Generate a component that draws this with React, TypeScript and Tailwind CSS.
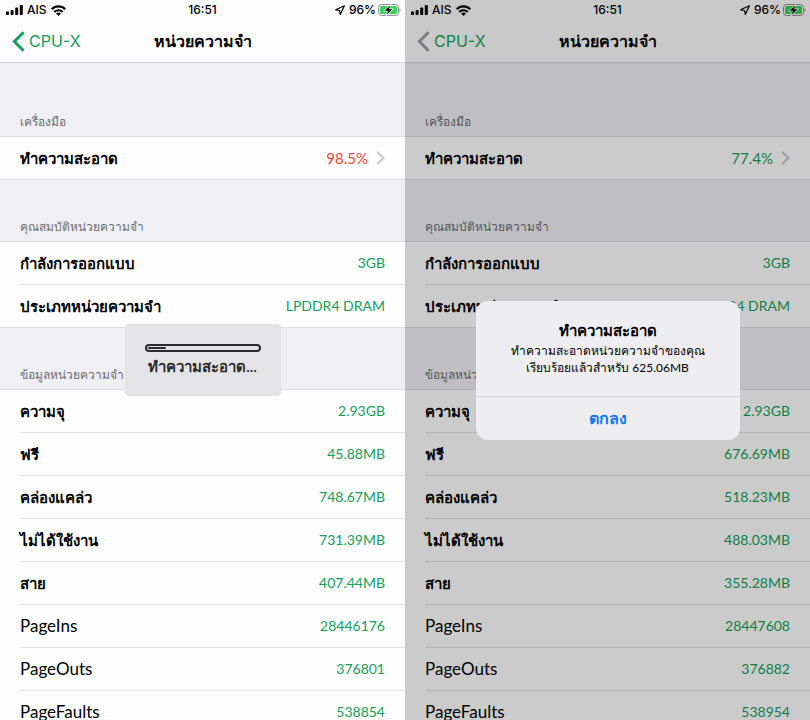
import type { ReactNode } from "react";

interface Row {
    label: string;
    value: string;
}

interface ScreenProps {
    usage: string;
    usageColor: string;
    backColor: string;
    info: Row[];
    children: ReactNode;
}

const specs: Row[] = [
    { label: "กำลังการออกแบบ", value: "3GB" },
    { label: "ประเภทหน่วยความจำ", value: "LPDDR4 DRAM" },
];

const before: Row[] = [
    { label: "ความจุ", value: "2.93GB" },
    { label: "ฟรี", value: "45.88MB" },
    { label: "คล่องแคล่ว", value: "748.67MB" },
    { label: "ไม่ได้ใช้งาน", value: "731.39MB" },
    { label: "สาย", value: "407.44MB" },
    { label: "PageIns", value: "28446176" },
    { label: "PageOuts", value: "376801" },
    { label: "PageFaults", value: "538854" },
];

const after: Row[] = [
    { label: "ความจุ", value: "2.93GB" },
    { label: "ฟรี", value: "676.69MB" },
    { label: "คล่องแคล่ว", value: "518.23MB" },
    { label: "ไม่ได้ใช้งาน", value: "488.03MB" },
    { label: "สาย", value: "355.28MB" },
    { label: "PageIns", value: "28447608" },
    { label: "PageOuts", value: "376882" },
    { label: "PageFaults", value: "538954" },
];

// Thai glyphs look bigger than Latin ones at the same size
const labelSize = (label: string) => (/^[A-Z]/.test(label) ? "text-[17px]" : "text-[15px] font-semibold");

const SignalIcon = () => (
    <svg width="17" height="10" viewBox="0 0 17 10" fill="currentColor" aria-hidden="true">
        <rect x="0" y="6.6" width="3" height="3.4" rx="0.8" />
        <rect x="4.6" y="5" width="3" height="5" rx="0.8" />
        <rect x="9.2" y="2.6" width="3" height="7.4" rx="0.8" />
        <rect x="13.8" y="0" width="3" height="10" rx="0.8" />
    </svg>
);

const WifiIcon = () => (
    <svg width="15" height="11" viewBox="0 0 15 11" fill="none" stroke="currentColor" strokeWidth="2.2" aria-hidden="true">
        <path d="M0.8 4.2a9.4 9.4 0 0 1 13.4 0" />
        <path d="M3.3 7a5.9 5.9 0 0 1 8.4 0" />
        <path d="M7.5 11L5.1 8.6a3.4 3.4 0 0 1 4.8 0z" fill="currentColor" stroke="none" />
    </svg>
);

const LocationIcon = () => (
    <svg width="10" height="10" viewBox="0 0 10 10" fill="none" stroke="currentColor" strokeWidth="1.2" strokeLinejoin="round" aria-hidden="true">
        <path d="M9.4 0.8L0.7 4.8l3.9.7.7 3.9z" />
    </svg>
);

const BatteryIcon = () => (
    <svg width="23" height="12" viewBox="0 0 23 12" aria-hidden="true">
        <rect x="0.5" y="0.5" width="20" height="11" rx="3" fill="none" stroke="#8e8e93" />
        <path d="M21.5 4.2c1.4.5 1.4 3.1 0 3.6z" fill="#8e8e93" />
        <rect x="2" y="2" width="17" height="8" rx="1.6" fill="#35d158" />
        <path d="M12.2 1.4L6.6 6.7h3.4L8.8 10.6l5.6-5.3H11z" fill="#000" stroke="#fff" strokeWidth="1.4" paintOrder="stroke" />
    </svg>
);

const StatusBar = () => (
    <div className="grid h-5 grid-cols-[1fr_auto_1fr] items-center font-['Inter','Noto_Sans',sans-serif] text-xs font-medium text-black">
        <div className="flex items-center gap-1 pl-1.5">
            <SignalIcon />
            <span>AIS</span>
            <WifiIcon />
        </div>
        <span>16:51</span>
        <div className="flex items-center justify-end gap-0.5 pr-1">
            <LocationIcon />
            <span className="ml-0.5">96%</span>
            <BatteryIcon />
        </div>
    </div>
);

const SectionTitle = ({ text, first = false }: { text: string; first?: boolean }) => (
    <h2 className={`flex items-end px-5 pb-1 text-xs leading-5 text-[#6d6d72] ${first ? "h-[73px]" : "h-[61px]"}`}>
        {text}
    </h2>
);

const RowList = ({ rows }: { rows: Row[] }) => (
    <dl className="border-y border-[#dcdce0] bg-[#fefefe]">
        {rows.map((row) => (
            <div key={row.label} className="group pl-5">
                <div className="flex h-[43px] items-center justify-between border-b border-[#e3e3e6] pr-5 group-last:h-[42px] group-last:border-b-0">
                    <dt className={`leading-5 text-black ${labelSize(row.label)}`}>{row.label}</dt>
                    <dd className="text-sm text-[#14a05c]">{row.value}</dd>
                </div>
            </div>
        ))}
    </dl>
);

const Screen = ({ usage, usageColor, backColor, info, children }: ScreenProps) => (
    <section className="relative h-screen overflow-hidden bg-[#efeff4]">
        <header className="h-[63px] border-b border-[#d4d4d8] bg-[#fcfcfd]">
            <StatusBar />
            <div className="grid h-[42px] grid-cols-[1fr_auto_1fr] items-center px-3">
                <button type="button" className="flex items-center gap-1 justify-self-start font-['Inter','Noto_Sans',sans-serif] text-base text-[#14a05c]">
                    <svg width="13" height="21" viewBox="0 0 13 21" fill="none" strokeWidth="3" className={backColor} aria-hidden="true">
                        <path d="M11.6 1.2L2.4 10.5l9.2 9.3" />
                    </svg>
                    CPU-X
                </button>
                <h1 className="text-base font-bold text-black">หน่วยความจำ</h1>
            </div>
        </header>

        <SectionTitle text="เครื่องมือ" first />
        <button type="button" className="flex h-11 w-full items-center border-y border-[#dcdce0] bg-[#fefefe] px-5">
            <span className="flex-1 text-left text-[15px] font-semibold text-black">ทำความสะอาด</span>
            <span className={`text-[15px] ${usageColor}`}>{usage}</span>
            <svg width="9" height="14" viewBox="0 0 9 14" fill="none" stroke="#c7c7cc" strokeWidth="2" className="ml-2" aria-hidden="true">
                <path d="M1.2 1l6.2 6-6.2 6" />
            </svg>
        </button>

        <SectionTitle text="คุณสมบัติหน่วยความจำ" />
        <RowList rows={specs} />

        <SectionTitle text="ข้อมูลหน่วยความจำ" />
        <RowList rows={info} />

        {children}
    </section>
);

const CleaningProgress = () => (
    <div className="absolute inset-0 flex items-center justify-center">
        <div role="status" className="flex h-[72px] w-[156px] flex-col items-center rounded-[4px] bg-[#e4e4e6] pt-5 text-[#2c2c2e]">
            <div className="h-2 w-[116px] rounded-full border-2 border-[#2c2c2e] p-px">
                <div className="h-0.5 w-[18px] rounded-full bg-[#2c2c2e]" />
            </div>
            <span className="mt-0.5 text-[15px] leading-6 font-semibold">ทำความสะอาด...</span>
        </div>
    </div>
);

const DoneAlert = () => (
    <div className="absolute inset-0 flex items-center justify-center bg-black/20 pt-5">
        <div role="alertdialog" aria-labelledby="alert-title" aria-describedby="alert-text" className="w-[264px] overflow-hidden rounded-xl bg-[#eeeef0] text-center text-black">
            <div className="h-24 border-b border-[#cfcfd2] pt-[17px]">
                <h2 id="alert-title" className="text-[15px] leading-6 font-bold">ทำความสะอาด</h2>
                <p id="alert-text" className="text-xs leading-[17px]">
                    ทำความสะอาดหน่วยความจำของคุณ
                    <br />
                    เรียบร้อยแล้วสำหรับ 625.06MB
                </p>
            </div>
            <button type="button" className="h-[43px] w-full text-base font-bold text-[#0a7aff]">ตกลง</button>
        </div>
    </div>
);

export default function App() {
    return (
        <main className="grid grid-cols-2 font-['Lato','Noto_Sans',sans-serif] text-base">
            <Screen usage="98.5%" usageColor="text-[#f0443a]" backColor="stroke-[#14a05c]" info={before}>
                <CleaningProgress />
            </Screen>
            <Screen usage="77.4%" usageColor="text-[#14a05c]" backColor="stroke-[#9c9c9f]" info={after}>
                <DoneAlert />
            </Screen>
        </main>
    );
}
